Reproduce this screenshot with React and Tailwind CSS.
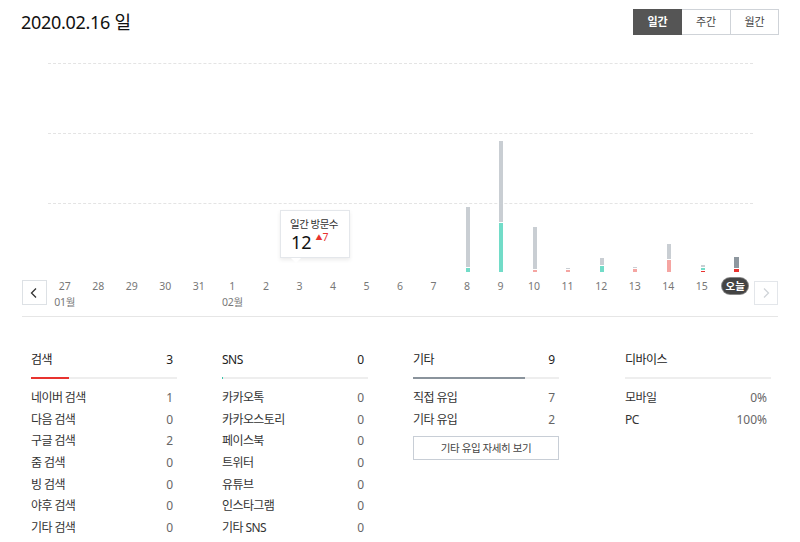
import React from "react";

const GRAY = "#c9ced3";
const TEAL = "#72dcc8";
const PINK = "#f5a5a2";
const RED = "#e8332f";
const DGRAY = "#8e979f";

const dates = [
  { d: "27", m: "01월" }, { d: "28" }, { d: "29" }, { d: "30" }, { d: "31" },
  { d: "1", m: "02월" }, { d: "2" }, { d: "3" }, { d: "4" }, { d: "5" },
  { d: "6" }, { d: "7" }, { d: "8" }, { d: "9" }, { d: "10" }, { d: "11" },
  { d: "12" }, { d: "13" }, { d: "14" }, { d: "15" }, { d: "오늘", today: true },
];

// segments bottom -> top: [color, height]
const bars = {
  12: [[TEAL, 4], [GRAY, 60]],
  13: [[TEAL, 49], [GRAY, 81]],
  14: [[PINK, 2], [GRAY, 42]],
  15: [[PINK, 2], [GRAY, 1.5]],
  16: [[TEAL, 6], [GRAY, 7]],
  17: [[PINK, 3], [GRAY, 1.5]],
  18: [[PINK, 12], [GRAY, 15]],
  19: [[RED, 1.5], [TEAL, 1.5], [GRAY, 2]],
  20: [[RED, 3], [DGRAY, 11]],
};

const stats = [
  {
    title: "검색", total: "3", fill: RED, pct: 26,
    rows: [["네이버 검색", "1"], ["다음 검색", "0"], ["구글 검색", "2"], ["줌 검색", "0"], ["빙 검색", "0"], ["야후 검색", "0"], ["기타 검색", "0"]],
  },
  {
    title: "SNS", total: "0", fill: "#3cc4a8", pct: 1,
    rows: [["카카오톡", "0"], ["카카오스토리", "0"], ["페이스북", "0"], ["트위터", "0"], ["유튜브", "0"], ["인스타그램", "0"], ["기타 SNS", "0"]],
  },
  {
    title: "기타", total: "9", fill: "#8a939c", pct: 77, button: true,
    rows: [["직접 유입", "7"], ["기타 유입", "2"]],
  },
  {
    title: "디바이스", total: "", fill: "#8a939c", pct: 0,
    rows: [["모바일", "0%"], ["PC", "100%"]],
  },
];

function StatCol({ s, className }) {
  return (
    <div className={"w-[146px] " + (className || "")}>
      <div className="flex h-[22px] items-center justify-between pr-[4px] text-[12px] text-[#222]">
        <span className="tracking-[-0.5px]">{s.title}</span>
        <span>{s.total}</span>
      </div>
      <div className="mt-[6px] h-[2px] bg-[#eeeeee]">
        <div className="h-[2px]" style={{ width: s.pct + "%", background: s.fill }} />
      </div>
      <div className="mt-[8px]">
        {s.rows.map(([l, v]) => (
          <div key={l} className="flex h-[21.7px] items-center justify-between pr-[4px] text-[12px]">
            <span className="tracking-[-0.6px] text-[#333]">{l}</span>
            <span className="text-[#666]">{v}</span>
          </div>
        ))}
      </div>
      {s.button && (
        <div className="mt-[6px] flex h-[24px] w-[146px] items-center justify-center border border-[#c8ced6] text-[10.5px] tracking-[-0.4px] text-[#444]">
          기타 유입 자세히 보기
        </div>
      )}
    </div>
  );
}

export default function App() {
  return (
    <div
      className="relative h-[542px] w-[800px] overflow-hidden bg-white"
      style={{ fontFamily: '"Noto Sans", "Noto Sans CJK KR", sans-serif' }}
    >
      {/* header */}
      <div className="flex items-start justify-between px-[21px] pt-[9px]">
        <div className="h-[26px] text-[18px] leading-[26px] tracking-[-0.3px] text-[#111]">2020.02.16 일</div>
        <div className="flex h-[26px]">
          <div className="flex w-[49px] items-center justify-center bg-[#555] text-[11px] font-bold text-white">일간</div>
          <div className="flex w-[49px] items-center justify-center border border-l-0 border-[#cfd3d8] text-[11px] text-[#444]">주간</div>
          <div className="flex w-[48px] items-center justify-center border border-l-0 border-[#cfd3d8] text-[11px] text-[#444]">월간</div>
        </div>
      </div>

      {/* chart */}
      <div className="px-[22px]">
        <div className="relative ml-[26px] mt-[28px] w-[705px]">
          <div className="h-[70px] border-t border-dashed border-[#e4e4e4]" />
          <div className="h-[70px] border-t border-dashed border-[#e4e4e4]" />
          <div className="h-[69px] border-t border-dashed border-[#e4e4e4]" />
          <div className="absolute inset-0 grid grid-cols-[repeat(21,minmax(0,1fr))]">
            {dates.map((_, i) => (
              <div key={i} className="flex flex-col-reverse items-center gap-[1px]">
                {(bars[i] || []).map(([c, h], j) => (
                  <div
                    key={j}
                    className={dates[i].today ? "w-[5px]" : "w-[4px]"}
                    style={{ background: c, height: h + "px" }}
                  />
                ))}
              </div>
            ))}
          </div>
        </div>

        <div className="mt-[7px] flex h-[38px] items-start border-b border-[#e6e6e6]">
          <div className="mt-[1px] flex h-[25px] w-[25px] items-center justify-center border border-[#dde1e5]">
            <svg width="10" height="12" viewBox="0 0 10 12" fill="none">
              <path d="M7 1.5 L2.5 6 L7 10.5" stroke="#333" strokeWidth="1.3" />
            </svg>
          </div>
          <div className="ml-[1px] grid w-[705px] grid-cols-[repeat(21,minmax(0,1fr))]">
            {dates.map((x, i) => (
              <div key={i} className="flex flex-col items-center">
                {x.today ? (
                  <div className="-mt-[1px] flex h-[16px] w-[26px] items-center justify-center rounded-full bg-[#444] text-[10.5px] font-bold leading-none text-white ring-1 ring-[#888]">
                    오늘
                  </div>
                ) : (
                  <div className="text-[10.5px] leading-[14px] text-[#777]">{x.d}</div>
                )}
                {x.m && <div className="mt-[2px] text-[10.5px] leading-[14px] tracking-[-0.3px] text-[#777]">{x.m}</div>}
              </div>
            ))}
          </div>
          <div className="ml-[2px] mt-[2px] flex h-[24px] w-[24px] items-center justify-center border border-[#e3e6ea]">
            <svg width="10" height="12" viewBox="0 0 10 12" fill="none">
              <path d="M3 1.5 L7.5 6 L3 10.5" stroke="#d0d4d8" strokeWidth="1.3" />
            </svg>
          </div>
        </div>
      </div>

      {/* stats */}
      <div className="mt-[32px] flex pl-[31px]">
        <StatCol s={stats[0]} />
        <StatCol s={stats[1]} className="ml-[45px]" />
        <StatCol s={stats[2]} className="ml-[45px]" />
        <StatCol s={stats[3]} className="ml-[66px]" />
      </div>

      {/* tooltip */}
      <div className="absolute left-[280px] top-[210px] h-[48px] w-[70px] border border-[#e4e7eb] bg-white shadow-[0_2px_4px_rgba(0,0,0,0.08)]">
        <div className="pl-[9px] pt-[6px] text-[10.5px] leading-[14px] tracking-[-0.5px] text-[#333]">일간 방문수</div>
        <div className="flex items-start pl-[10px]">
          <span className="text-[18px] leading-[22px] text-[#111]">12</span>
          <span className="ml-[4px] mt-[2px] text-[7px] leading-[10px] text-[#e8332f]">▲</span>
          <span className="text-[10.5px] leading-[12px] text-[#e8332f]">7</span>
        </div>
        <div className="absolute left-[10px] top-[47px] h-0 w-0 border-x-[5px] border-t-[5px] border-x-transparent border-t-white" />
      </div>
    </div>
  );
}
